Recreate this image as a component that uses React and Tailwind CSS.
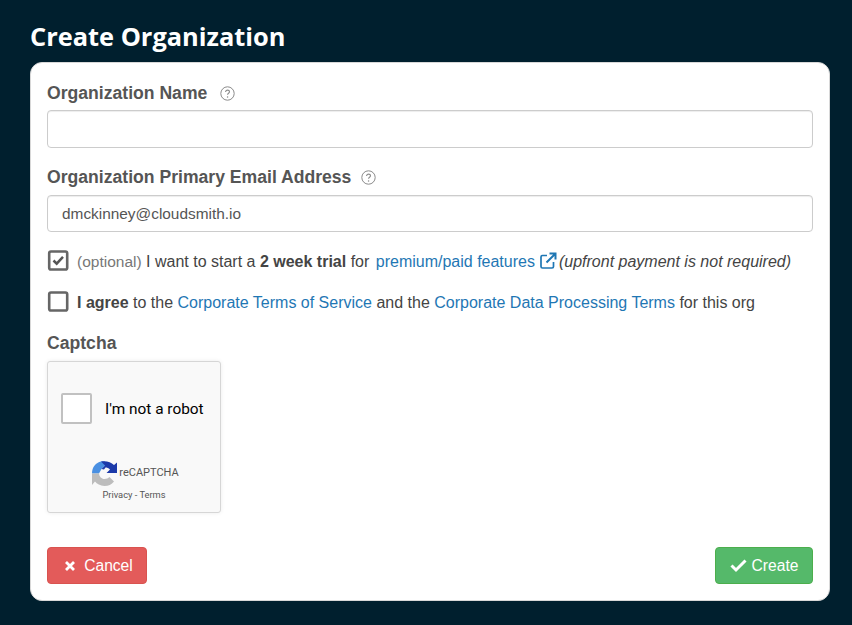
import React from "react";

const sans = "font-['Liberation_Sans',Arial,sans-serif]";

function Help() {
  return (
    <svg width="15" height="15" viewBox="0 0 15 15" className="shrink-0">
      <circle cx="7.5" cy="7.5" r="6.7" fill="none" stroke="#8a8a8a" strokeWidth="1" />
      <path d="M5.6 5.9c0-1.1.9-1.8 1.95-1.8s1.95.7 1.95 1.7c0 1.5-1.95 1.5-1.95 3" fill="none" stroke="#8a8a8a" strokeWidth="1.1" />
      <circle cx="7.55" cy="10.9" r=".75" fill="#8a8a8a" />
    </svg>
  );
}

function Box({ checked }) {
  return (
    <svg width="22" height="22" viewBox="0 0 22 22" className="shrink-0">
      <rect x="2.200" y="1.500" width="18" height="18" rx="1.800" fill="#fff" stroke="#666" strokeWidth="2.600" />
      {checked && <path d="M6.500 10.500l3.200 3.200 6.300-6.800" fill="none" stroke="#555" strokeWidth="2.500" />}
    </svg>
  );
}

function Recaptcha() {
  return (
    <svg width="25" height="25" viewBox="0 0 25 25" className="shrink-0">
      <path d="M0 12.500C0 6 4 1.500 9 .5l4 0V4.500L9.500 8 7 12.500z" fill="#4a90e2" />
      <path d="M9 .5c5-1 10 .5 13 3.500L25 1.500V12H14.500l3.500-3.500c-1.500-1.500-3-2-4.500-2L12 8.500 9.500 8 13 4.500z" fill="#1c3aa9" />
      <path d="M0 12.500h7c.3 3 2.500 5.500 5.500 5.500 2 0 3.800-.7 5-2l4.500 4.500c-2.500 3-5.500 4.500-9.500 4.500C8 24.500 5 23 3 20.500L0 24z" fill="#bdbdbd" />
    </svg>
  );
}

export default function App() {
  return (
    <div className={`min-h-[625px] w-[852px] bg-[#001f2e] pl-[30px] pr-[22px] pt-[19px] ${sans}`}>
      <h1 className="font-['Open_Sans',sans-serif] text-[25.4px] leading-[34px] font-bold text-white mb-[9px]">Create Organization</h1>
      <div className="h-[539px] rounded-[12px] border border-[#d8d8d8] bg-white px-[16px] pt-[19px] text-[16px] text-[#444] flex flex-col">
        <div className="flex items-center gap-[13px] h-[22px] mb-[6px]">
          <span className="text-[17.6px] font-bold text-[#555]">Organization Name</span>
          <Help />
        </div>
        <div className="h-[38px] rounded-[4px] border border-[#ccc] bg-white shadow-[inset_0_1px_1px_rgba(0,0,0,0.075)]" />
        <div className="flex items-center gap-[10px] h-[22px] mt-[18px] mb-[7px]">
          <span className="text-[17.6px] font-bold text-[#555]">Organization Primary Email Address</span>
          <Help />
        </div>
        <div className="h-[37px] rounded-[4px] border border-[#ccc] bg-white px-[14px] pt-[1px] flex items-center text-[15.4px] text-[#555] shadow-[inset_0_1px_1px_rgba(0,0,0,0.075)]">dmckinney@cloudsmith.io</div>
        <div className="flex items-center h-[24px] mt-[17px] whitespace-nowrap">
          <Box checked />
          <span className="ml-[8px] pt-[2px]">
            <span className="text-[#777] text-[15.5px]">(optional)</span> I want to start a <b>2 week trial</b> for <span className="text-[#1f77b4] ml-[2px]">premium/paid features</span>
          </span>
          <svg width="18" height="18" viewBox="0 0 18 18" className="ml-[4px] shrink-0">
            <path d="M8 3.500H3.500a1.500 1.500 0 0 0-1.500 1.500v9.500A1.500 1.500 0 0 0 3.500 16H13a1.500 1.500 0 0 0 1.500-1.500V10" fill="none" stroke="#1f77b4" strokeWidth="1.700" />
            <path d="M7.500 10.500L15.500 2.500M10.500 1.500h6v6" fill="none" stroke="#1f77b4" strokeWidth="2" />
          </svg>
          <i className="ml-[2px] pt-[2px]">(upfront payment is not required)</i>
        </div>
        <div className="flex items-center h-[24px] mt-[17px] whitespace-nowrap">
          <Box />
          <span className="ml-[8px] pt-[2px]">
            <b>I agree</b> to the <span className="text-[#1f77b4]">Corporate Terms of Service</span> and the <span className="text-[#1f77b4]">Corporate Data Processing Terms</span> for this org
          </span>
        </div>
        <div className="text-[17.6px] font-bold text-[#555] mt-[16px] h-[22px]">Captcha</div>
        <div className="mt-[9px] h-[152px] w-[174px] rounded-[3px] border border-[#d6d6d6] bg-[#f9f9f9] shadow-[0_0_4px_rgba(0,0,0,0.08)] font-['Roboto',sans-serif] flex flex-col">
          <div className="flex items-center pl-[13px] pt-[30px]">
            <div className="h-[31px] w-[31px] rounded-[2px] border-2 border-[#c1c1c1] bg-white" />
            <span className="ml-[13px] text-[15.4px] leading-[31px] pt-[2px] text-black">I'm not a robot</span>
          </div>
          <div className="mt-[36px] flex items-center justify-center pl-[3px] text-[11px] text-[#555]">
            <Recaptcha />
            <span className="ml-[2px]">reCAPTCHA</span>
          </div>
          <div className="text-center text-[9.3px] leading-[12px] pt-[3px] text-[#555]">Privacy - Terms</div>
        </div>
        <div className="mt-[34px] flex justify-between text-[15.6px]">
          <div className="flex h-[37px] w-[100px] items-center justify-center gap-[8px] pl-[3px] rounded-[4px] border border-[#d9534f] bg-[#e35b5a] text-white">
            <svg width="12" height="12" viewBox="0 0 12 12"><path d="M2 2l8 8M10 2l-8 8" stroke="#fff" strokeWidth="2.800" /></svg>
            Cancel
          </div>
          <div className="flex h-[37px] w-[98px] items-center justify-center gap-[5px] rounded-[4px] border border-[#4cae4c] bg-[#55b96a] text-white">
            <svg width="17" height="14" viewBox="0 0 17 14"><path d="M1.500 6.500l4.500 4.500 9.500-9.500" fill="none" stroke="#fff" strokeWidth="3" /></svg>
            Create
          </div>
        </div>
      </div>
    </div>
  );
}
